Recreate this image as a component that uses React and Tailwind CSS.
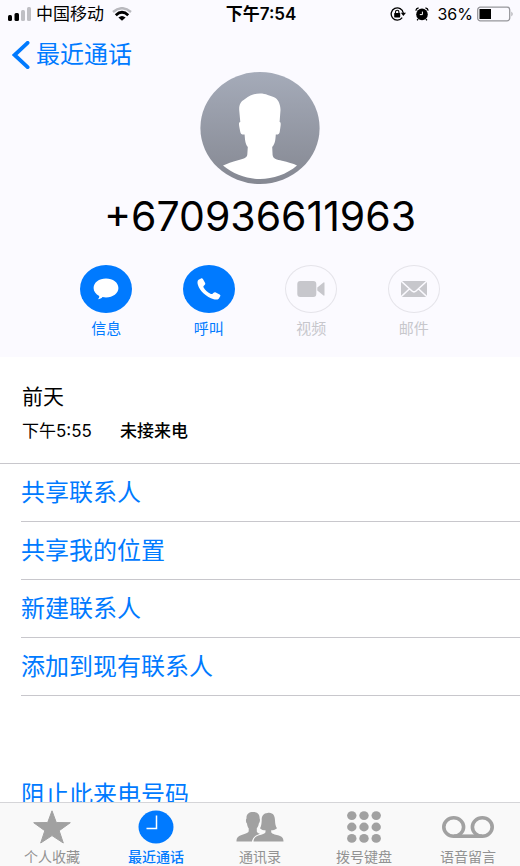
import React from "react";

const SignalIcon = () => (
  <svg width="24" height="14" viewBox="0 0 24 14" aria-hidden="true">
    <rect x="0" y="8" width="4" height="6" rx="1.5" fill="#000" />
    <rect x="6.5" y="6" width="4.5" height="8" rx="1.5" fill="#000" />
    <rect x="13" y="3" width="4" height="11" rx="1.5" fill="#bfbfc4" />
    <rect x="19" y="0" width="4" height="14" rx="1.5" fill="#bfbfc4" />
  </svg>
);

const WifiIcon = () => (
  <svg width="20" height="14" viewBox="0 0 20 14" fill="none" aria-hidden="true">
    <path d="M1 5 Q10 -2.6 19 5" stroke="#b9b9be" strokeWidth="2.4" />
    <path d="M3.8 8.2 Q10 2.4 16.2 8.2" stroke="#000" strokeWidth="2.8" />
    <path d="M6.4 10.6 Q10 7.4 13.6 10.6 L10 13.8 Z" fill="#000" />
  </svg>
);

const RotationLockIcon = () => (
  <svg width="17" height="14" viewBox="0 0 17 14" fill="none" aria-hidden="true">
    <path
      d="M13.3 6 A6.1 6.1 0 1 0 12.2 10.6"
      stroke="#000"
      strokeWidth="1.3"
    />
    <path d="M10.8 5.8 H16 L13.4 9 Z" fill="#000" />
    <path d="M5.5 6.5 V5 a1.7 1.7 0 0 1 3.4 0 V6.5" stroke="#000" strokeWidth="1.1" />
    <rect x="4.2" y="6" width="6" height="4.4" rx="0.6" fill="#000" />
  </svg>
);

const AlarmIcon = () => (
  <svg width="14" height="14" viewBox="0 0 14 14" fill="none" aria-hidden="true">
    <circle cx="7" cy="7.4" r="5.8" fill="#000" />
    <path
      d="M0.8 3.6 Q1.2 1.4 3.6 0.9 M13.2 3.6 Q12.8 1.4 10.4 0.9 M3 12 L2.2 13.4 M11 12 L11.8 13.4"
      stroke="#000"
      strokeWidth="1.3"
    />
    <path d="M7.4 4.6 V7.6 H4.8" stroke="#fff" strokeWidth="1" />
  </svg>
);

const BatteryIcon = () => (
  <svg width="37" height="16" viewBox="0 0 37 16" fill="none" aria-hidden="true">
    <rect x="0.7" y="1.2" width="32" height="13.6" rx="2.6" stroke="#97979c" strokeWidth="1.3" />
    <rect x="2.5" y="3" width="11.5" height="10" fill="#000" />
    <path d="M34.5 5.5 Q36.6 8 34.5 10.5 Z" fill="#97979c" />
  </svg>
);

const BackIcon = () => (
  <svg width="18" height="28" viewBox="0 0 18 28" fill="none" aria-hidden="true">
    <path
      d="M15.6 1.8 L2.6 14 L15.6 26.2"
      stroke="#007aff"
      strokeWidth="3.8"
      strokeLinecap="round"
    />
  </svg>
);

const Avatar = () => (
  <svg width="120" height="112" viewBox="0 0 120 112" role="img" aria-label="头像">
    <defs>
      <linearGradient id="avatar" x1="0" y1="0" x2="0" y2="1">
        <stop offset="0" stopColor="#a5abb9" />
        <stop offset="1" stopColor="#858892" />
      </linearGradient>
    </defs>
    <ellipse cx="60" cy="56" rx="59.6" ry="56" fill="url(#avatar)" />
    <path
      d="M60 21.5 C66 21.5 70 24 73.5 25 C78 26.5 80.5 32 80.5 38 L79.6 50 C81.5 50 80.6 54 79.7 60 C79 63 77 62.5 75.8 62.6 C75.5 67 75.3 72 72.2 75 L72.6 83 C73 87 77 87.6 82 88.8 C88 90.2 93 91.5 97 93.6 C76 111.5 44 111.5 23 93.6 C27 91.5 32 90 38 88.2 C43 86.8 47 86 47.3 82.5 L47.8 75 C45 72 45 67 44.6 62.6 C42.5 62.5 41 63 40.2 59.5 C39.2 54 38 50 40.3 50 L39.2 38 C39 32 41 29.5 45 27 C50 23.5 54 21.5 60 21.5 Z"
      fill="#fff"
    />
  </svg>
);

const MessageIcon = () => (
  <svg width="26" height="22" viewBox="0 0 26 22" fill="#fff" aria-hidden="true">
    <path d="M13 0.6 C20 0.6 25.4 4.6 25.4 10 C25.4 15.4 20 19.4 13 19.4 C11.8 19.4 10.6 19.3 9.5 19 C8.5 20.3 6.8 21.2 4.8 21.3 C6 20.2 6.4 19 6.2 17.9 C2.8 16.2 0.6 13.4 0.6 10 C0.6 4.6 6 0.6 13 0.6 Z" />
  </svg>
);

const PhoneIcon = () => (
  <svg width="24" height="22" viewBox="0 0 24 22" fill="#fff" aria-hidden="true">
    <path d="M1.6 1.8 L4 0.5 C4.8 0.1 5.4 0.4 5.9 1.1 L8 4.7 C8.5 5.6 8.3 6.3 7.6 6.9 L6.6 7.9 C6.2 8.4 6.3 8.9 6.6 9.4 C8.2 12.2 10.8 14.4 13.9 15.9 C14.6 16.2 15.1 16.2 15.6 15.7 L16.6 14.7 C17.3 14 18 14 18.8 14.4 L22.6 16.5 C23.4 17 23.6 17.6 23.2 18.3 L21.9 20.4 C21 21.6 18.9 21.9 16.7 21.3 C9.5 19.2 2.6 13.1 0.8 6.6 C0.2 4.5 0.4 2.7 1.6 1.8 Z" />
  </svg>
);

const VideoIcon = () => (
  <svg width="28" height="16" viewBox="0 0 28 16" fill="#c7c7cc" aria-hidden="true">
    <rect x="0.3" y="0" width="19" height="16" rx="3" />
    <path d="M20.3 6.5 L26.5 1.4 Q27.5 1 27.5 2 V14 Q27.5 15 26.5 14.6 L20.3 9.6 Z" />
  </svg>
);

const MailIcon = () => (
  <svg width="26" height="16" viewBox="0 0 26 16" fill="none" aria-hidden="true">
    <rect width="26" height="16" fill="#c7c7cc" />
    <path
      d="M-0.5 -0.5 L11 10 Q13 11.8 15 10 L26.5 -0.5 M0 15.8 L8.6 7.8 M26 15.8 L17.4 7.8"
      stroke="#fbfaff"
      strokeWidth="1.5"
    />
  </svg>
);

const StarIcon = () => (
  <svg
    width="38"
    height="34"
    viewBox="0 0 38 34"
    fill="#a1a1a1"
    stroke="#a1a1a1"
    strokeLinejoin="round"
    aria-hidden="true"
  >
    <path d="M19 0.8 L23.3 12.5 L37.3 12.7 L26.2 20.7 L30.3 33 L19 25.6 L7.7 33 L11.8 20.7 L0.7 12.7 L14.7 12.5 Z" />
  </svg>
);

const ClockIcon = () => (
  <svg width="36" height="34" viewBox="0 0 36 34" fill="none" aria-hidden="true">
    <ellipse cx="18" cy="17" rx="17.5" ry="16.4" fill="#007aff" />
    <path d="M18.5 5.5 V18.5 H8.5" stroke="#fff" strokeWidth="1.5" />
  </svg>
);

const ContactsIcon = () => (
  <svg width="48" height="32" viewBox="0 0 48 32" fill="#a1a1a1" aria-hidden="true">
    <path
      d="M17 1 C21 1 23.8 3.2 23.6 7.5 C24.4 8.5 23.8 11.5 22.8 12.4 C22.5 15 21.5 16.3 20.8 17.3 V20.5 C21 22.2 23.5 22.7 25.8 23.6 C19.5 25 16.5 27 16 30.5 H0.5 C0.3 26 3 24.7 7 23.4 C10 22.5 12.6 22 12.7 20.3 V17.3 C11.8 16.2 11.2 14.8 11 12.5 C9.8 11.5 9.6 8.5 10.5 7.5 C10.2 3.2 13 1 17 1 Z"
    />
    <path
      d="M31.5 2 C37 1 39 5 39 9.5 C39.2 13 39.6 15.5 41 17.2 C39 18.8 37 19.3 35.2 19.3 V21.3 C35.7 23 39 23.5 42 24.3 C46 25.3 47.5 27.3 47.5 30.5 H17.5 C17.5 27.5 19.5 25.3 23 24.3 C26 23.4 29 23 29.5 21.3 V19.3 C27.5 19.3 25.5 18.8 24 17.2 C25.2 15.5 25.5 13 25.7 9.5 C25.5 5 27.5 2.2 31.5 2 Z"
      stroke="#f9f9f9"
      strokeWidth="2"
      paintOrder="stroke"
    />
  </svg>
);

const KeypadIcon = () => (
  <svg width="34" height="32" viewBox="0 0 34 32" fill="#a1a1a1" aria-hidden="true">
    {[4.8, 17, 29.2].map((x) =>
      [4.6, 16, 27.4].map((y) => (
        <ellipse key={`${x}-${y}`} cx={x} cy={y} rx="4.7" ry="4.4" />
      ))
    )}
  </svg>
);

const VoicemailIcon = () => (
  <svg
    width="52"
    height="24"
    viewBox="0 0 52 24"
    fill="none"
    stroke="#a1a1a1"
    strokeWidth="3.6"
    aria-hidden="true"
  >
    <ellipse cx="11.7" cy="12" rx="9.9" ry="9.2" />
    <ellipse cx="40.3" cy="12" rx="9.9" ry="9.2" />
    <path d="M11.7 21.2 H40.3" />
  </svg>
);

const contactActions = [
  { label: "信息", icon: MessageIcon, enabled: true },
  { label: "呼叫", icon: PhoneIcon, enabled: true },
  { label: "视频", icon: VideoIcon, enabled: false },
  { label: "邮件", icon: MailIcon, enabled: false },
];

const options = ["共享联系人", "共享我的位置", "新建联系人", "添加到现有联系人"];

const tabs = [
  { label: "个人收藏", icon: StarIcon },
  { label: "最近通话", icon: ClockIcon, active: true },
  { label: "通讯录", icon: ContactsIcon },
  { label: "拨号键盘", icon: KeypadIcon },
  { label: "语音留言", icon: VoicemailIcon },
];

const StatusBar = () => (
  <div className="grid grid-cols-[1fr_auto_1fr] items-center h-7 pl-2 pr-1.5 text-[17px] leading-7">
    <div className="flex items-center">
      <SignalIcon />
      <span className="ml-1 mr-2">中国移动</span>
      <WifiIcon />
    </div>
    <div className="font-semibold">下午7:54</div>
    <div className="flex items-center justify-end gap-2">
      <RotationLockIcon />
      <AlarmIcon />
      <div className="flex items-center gap-1">
        <span className="text-base">36%</span>
        <BatteryIcon />
      </div>
    </div>
  </div>
);

const ContactAction = ({ label, icon: Icon, enabled }) => (
  <button
    disabled={!enabled}
    className={`flex flex-col items-center gap-1 text-[15px] leading-6 ${
      enabled ? "text-[#007aff]" : "text-[#c7c7cc]"
    }`}
  >
    <span
      className={`flex items-center justify-center w-[52px] h-12 rounded-[50%] ${
        enabled ? "bg-[#007aff]" : "border border-[#e5e4ea]"
      }`}
    >
      <Icon />
    </span>
    {label}
  </button>
);

const App = () => {
  return (
    <div className="flex flex-col h-screen bg-white text-black font-['Inter','Noto_Sans_CJK_SC',sans-serif]">
      <header className="shrink-0 bg-[#fbfaff] pb-4">
        <StatusBar />
        <button className="flex items-center gap-1.5 h-11 mt-1 px-3 pt-1.5 pb-1 text-2xl text-[#007aff]">
          <BackIcon />
          最近通话
        </button>
        <div className="flex flex-col items-center -mt-1">
          <Avatar />
          <h1 className="mt-2 text-[41px] leading-12">+670936611963</h1>
        </div>
        <div className="grid grid-cols-4 max-w-[410px] mx-auto mt-[25px]">
          {contactActions.map((a) => (
            <ContactAction key={a.label} {...a} />
          ))}
        </div>
      </header>

      <main className="flex-1 min-h-0 overflow-hidden">
        <section className="px-[22px] pt-6 pb-[18px] border-b border-[#c8c7cc]">
          <h2 className="text-[21px] leading-8">前天</h2>
          <div className="flex gap-7 mt-1 text-[17px] leading-7">
            <span>下午5:55</span>
            <span className="font-medium">未接来电</span>
          </div>
        </section>
        <ul className="pl-[21px]">
          {options.map((option) => (
            <li key={option} className="border-b border-[#c8c7cc]">
              <button className="w-full h-[57px] text-left text-2xl text-[#007aff]">
                {option}
              </button>
            </li>
          ))}
        </ul>
        <button className="w-full h-[57px] mt-[70px] pl-[21px] text-left text-2xl text-[#007aff]">
          阻止此来电号码
        </button>
      </main>

      <nav className="grid grid-cols-5 shrink-0 h-16 bg-[#f9f9f9] border-t border-[#d5d5d8]">
        {tabs.map(({ label, icon: Icon, active }) => (
          <a
            key={label}
            href="#"
            aria-current={active ? "page" : undefined}
            className={`flex flex-col items-center gap-0.5 pt-1.5 text-sm leading-5 ${
              active ? "text-[#007aff] font-medium" : "text-[#929292]"
            }`}
          >
            <span className="flex items-center justify-center h-9">
              <Icon />
            </span>
            {label}
          </a>
        ))}
      </nav>
    </div>
  );
};

export default App;
